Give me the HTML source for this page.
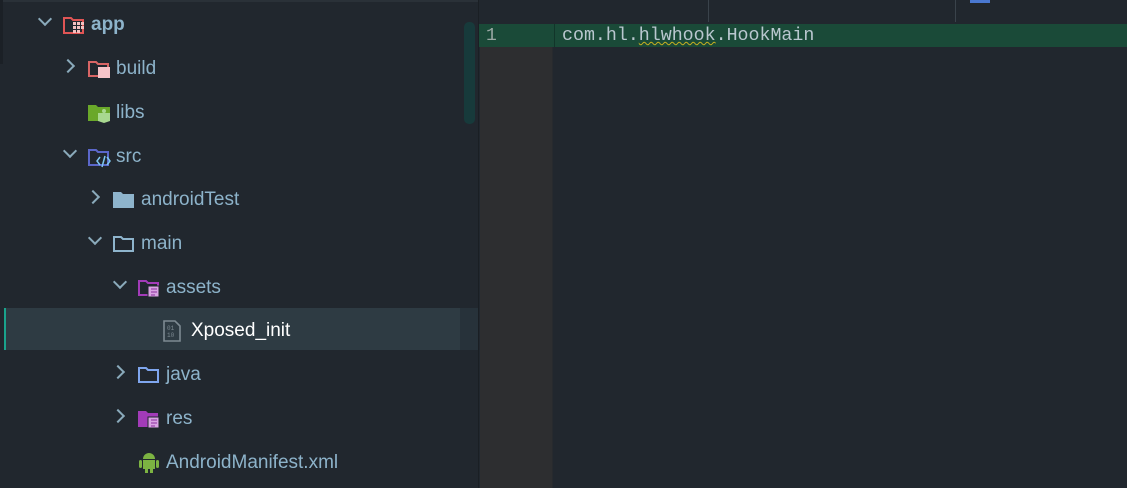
<!DOCTYPE html><html><head><style>
body{margin:0;width:1127px;height:488px;background:#21272e;overflow:hidden;position:relative;font-family:"Liberation Sans",sans-serif}
.p{position:absolute}
.row{position:absolute;left:0;width:460px;height:44px;font-size:19px;color:#8db3ca}
.row span{position:absolute;top:12px}
.chev{position:absolute;top:15px;width:8px;height:8px;border-right:2px solid #8aaabb;border-bottom:2px solid #8aaabb}
.down{transform:rotate(45deg)}
.right{transform:rotate(-45deg)}
</style></head><body>
<div class="p" style="left:0;top:0;width:478px;height:2px;background:#2a3138"></div>
<div class="p" style="left:0;top:0;width:3px;height:64px;background:#1b2026"></div>
<div class="p" style="left:464px;top:22px;width:11px;height:102px;border-radius:5px;background:#173a3b"></div>
<div class="p" style="left:4px;top:308px;width:456px;height:42px;background:#2e3b43"></div>
<div class="p" style="left:460px;top:308px;width:18px;height:42px;background:#27323a"></div>
<div class="p" style="left:4px;top:308px;width:2px;height:42px;background:#1aa38c"></div>

<div class="row" style="top:2px"><i class="chev down" style="left:40px;top:12px"></i>
<svg class="p" style="left:63px;top:13px" width="22" height="20"><path d="M1 3h7l2 2h10v13H1z" fill="none" stroke="#e05555" stroke-width="2"/><g fill="#f3c0c0"><rect x="10" y="7" width="3" height="3"/><rect x="14" y="7" width="3" height="3"/><rect x="18" y="7" width="3" height="3"/><rect x="10" y="11" width="3" height="3"/><rect x="14" y="11" width="3" height="3"/><rect x="18" y="11" width="3" height="3"/><rect x="10" y="15" width="3" height="3"/><rect x="14" y="15" width="3" height="3"/></g></svg>
<span style="left:91px;font-weight:bold">app</span></div>

<div class="row" style="top:46px"><i class="chev right" style="left:63px"></i>
<svg class="p" style="left:88px;top:13px" width="24" height="20"><path d="M1 3h7l2 2h10v12H1z" fill="none" stroke="#d86565" stroke-width="2"/><rect x="10" y="8" width="12" height="11" fill="#f6c3c8"/></svg>
<span style="left:116px">build</span></div>

<div class="row" style="top:90px">
<svg class="p" style="left:88px;top:13px" width="24" height="20"><path d="M0 2h8l2 2h12v14H0z" fill="#6aa82a"/><path d="M10 10h12v8l-6 2-6-2z" fill="#a8d890"/><circle cx="16" cy="8" r="2" fill="#a8d890"/></svg>
<span style="left:116px">libs</span></div>

<div class="row" style="top:134px"><i class="chev down" style="left:65px;top:12px"></i>
<svg class="p" style="left:88px;top:13px" width="24" height="22"><path d="M1 3h7l2 2h10v13H1z" fill="none" stroke="#5b67c9" stroke-width="2"/><path d="M12 10l-3 4 3 4M19 10l3 4-3 4M17 9l-3 11" fill="none" stroke="#7ec6f0" stroke-width="1.5"/></svg>
<span style="left:116px">src</span></div>

<div class="row" style="top:177px"><i class="chev right" style="left:88px"></i>
<svg class="p" style="left:113px;top:13px" width="22" height="20"><path d="M0 2h8l2 2h11v14H0z" fill="#8eb4cc"/></svg>
<span style="left:141px">androidTest</span></div>

<div class="row" style="top:221px"><i class="chev down" style="left:90px;top:12px"></i>
<svg class="p" style="left:113px;top:13px" width="22" height="20"><path d="M1 3h7l2 2h10v12H1z" fill="none" stroke="#8eb4cc" stroke-width="2"/></svg>
<span style="left:141px">main</span></div>

<div class="row" style="top:265px"><i class="chev down" style="left:115px;top:12px"></i>
<svg class="p" style="left:138px;top:13px" width="24" height="22"><path d="M1 3h7l2 2h10v12H1z" fill="none" stroke="#a23bb8" stroke-width="2"/><rect x="10" y="8" width="11" height="11" fill="#d9a3e3" stroke="#21272e"/><path d="M13 11h6M13 14h6M13 17h4" stroke="#8a2d9e"/></svg>
<span style="left:166px">assets</span></div>

<div class="row" style="top:308px">
<svg class="p" style="left:163px;top:12px" width="18" height="22"><path d="M1 1h11l5 5v15H1z" fill="none" stroke="#7d8a92" stroke-width="1.6"/><text x="4" y="10" font-size="6" fill="#7d8a92" font-family="Liberation Mono">01</text><text x="4" y="17" font-size="6" fill="#7d8a92" font-family="Liberation Mono">10</text></svg>
<span style="left:191px;color:#fff">Xposed_init</span></div>

<div class="row" style="top:352px"><i class="chev right" style="left:113px"></i>
<svg class="p" style="left:138px;top:13px" width="22" height="20"><path d="M1 3h7l2 2h10v12H1z" fill="none" stroke="#7fa6ee" stroke-width="2"/></svg>
<span style="left:166px">java</span></div>

<div class="row" style="top:396px"><i class="chev right" style="left:113px"></i>
<svg class="p" style="left:138px;top:13px" width="24" height="22"><path d="M0 2h8l2 2h10v14H0z" fill="#a23bb8"/><rect x="10" y="8" width="11" height="11" fill="#d9a3e3" stroke="#21272e"/><path d="M13 11h6M13 14h6M13 17h4" stroke="#8a2d9e"/></svg>
<span style="left:166px">res</span></div>

<div class="row" style="top:440px">
<svg class="p" style="left:139px;top:11px" width="20" height="22"><path d="M4 8a6 6 0 0 1 12 0z" fill="#7cb342"/><rect x="4" y="9" width="12" height="9" fill="#7cb342"/><rect x="0" y="9" width="3" height="8" rx="1.5" fill="#7cb342"/><rect x="17" y="9" width="3" height="8" rx="1.5" fill="#7cb342"/><rect x="6" y="17" width="3" height="5" fill="#7cb342"/><rect x="11" y="17" width="3" height="5" fill="#7cb342"/></svg>
<span style="left:166px">AndroidManifest.xml</span></div>

<div class="p" style="left:478px;top:0;width:1px;height:488px;background:#1a1f24"></div>
<div class="p" style="left:479px;top:0;width:648px;height:24px;background:#21272e"></div>
<div class="p" style="left:708px;top:0;width:1px;height:22px;background:#3a434b"></div>
<div class="p" style="left:955px;top:0;width:1px;height:22px;background:#3a434b"></div>
<div class="p" style="left:970px;top:0;width:20px;height:3px;background:#4a78d0"></div>
<div class="p" style="left:480px;top:47px;width:72px;height:441px;background:#2d2e30"></div>
<div class="p" style="left:552px;top:47px;width:1px;height:441px;background:#272a2e"></div>
<div class="p" style="left:479px;top:24px;width:648px;height:23px;background:#1a4a38"></div>
<div class="p" style="left:554px;top:24px;width:1px;height:23px;background:#12352a"></div>
<div class="p" style="left:486px;top:26px;font:18px 'Liberation Mono',monospace;color:#9aa8a4">1</div>
<div class="p" style="left:562px;top:26px;font:18.3px 'Liberation Mono',monospace;color:#b9c7cf;white-space:pre">com.hl.<span style="text-decoration:underline wavy #c8b020;text-decoration-thickness:1px">hlwhook</span>.HookMain</div>
</body></html>
